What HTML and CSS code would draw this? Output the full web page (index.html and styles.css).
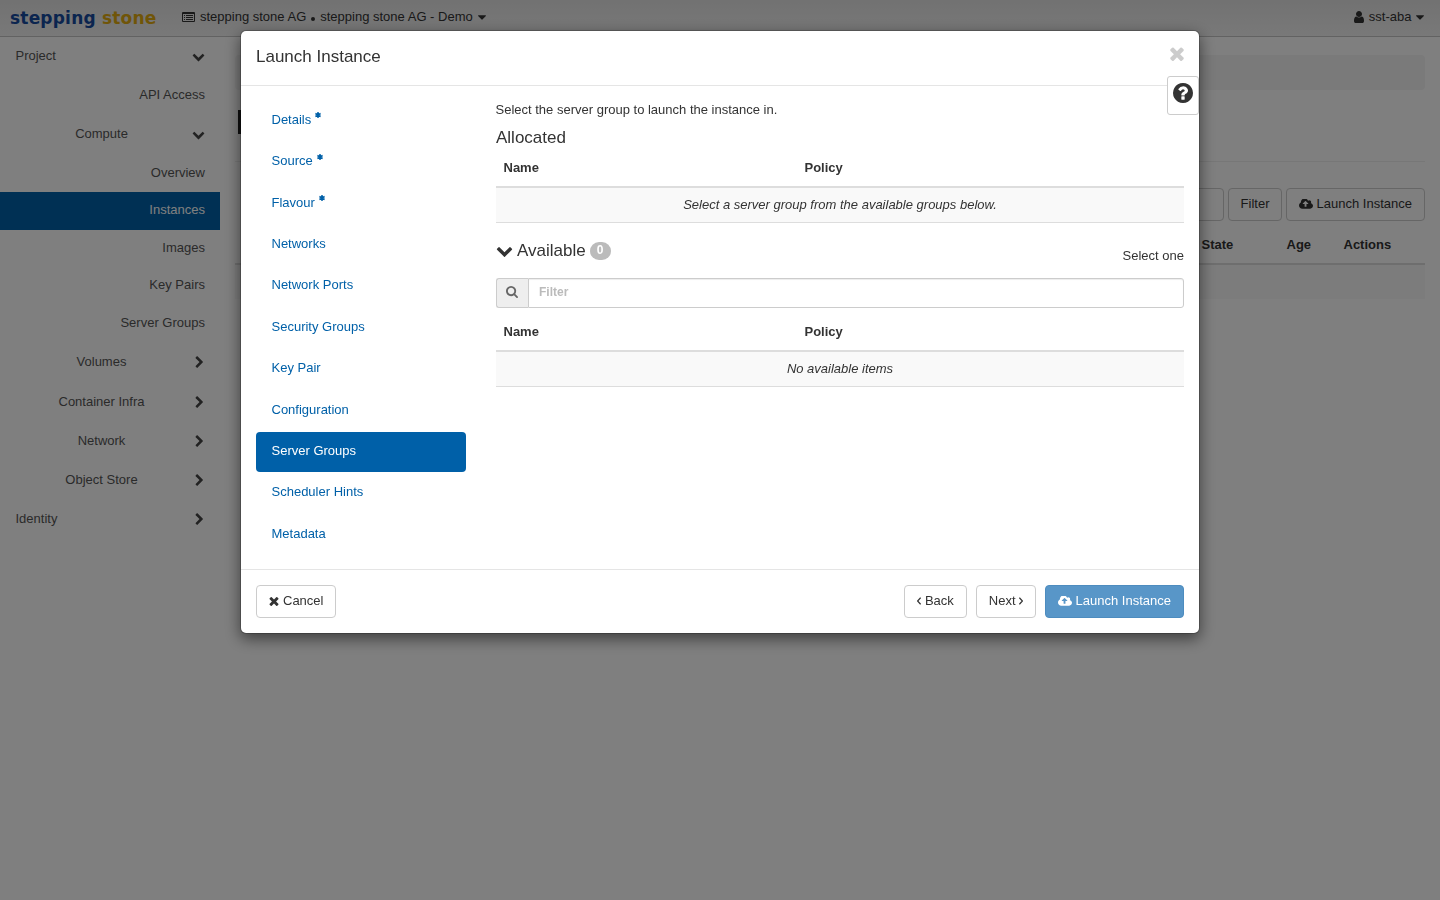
FILE: index.html
```html
<!DOCTYPE html>
<html lang="en">
<head>
  <meta charset="UTF-8" />
  <meta name="viewport" content="width=device-width, initial-scale=1.0"/>
  <title>Instances</title>
  <link rel="stylesheet" href="styles.css">
</head>
<body>
  <!-- Icon definitions -->
  <svg class="icon-defs" width="0" height="0">
    <symbol id="chevron-down" viewBox="0 0 1792 1792"><path d="M1683 808l-742 741q-19 19-45 19t-45-19l-742-741q-19-19-19-45.500t19-45.500l166-165q19-19 45-19t45 19l531 531 531-531q19-19 45-19t45 19l166 165q19 19 19 45.500t-19 45.500z"/></symbol>
    <symbol id="chevron-right" viewBox="0 0 1792 1792"><path d="M1363 877l-742 742q-19 19-45 19t-45-19l-166-166q-19-19-19-45t19-45l531-531-531-531q-19-19-19-45t19-45l166-166q19-19 45-19t45 19l742 742q19 19 19 45t-19 45z"/></symbol>
    <symbol id="caret-down" viewBox="384 640 1024 576"><path d="M1408 704q0 26-19 45l-448 448q-19 19-45 19t-45-19l-448-448q-19-19-19-45t19-45 45-19h896q26 0 45 19t19 45z"/></symbol>
    <symbol id="times" viewBox="302 238 1188 1316"><path d="M1490 1322q0 40-28 68l-136 136q-28 28-68 28t-68-28l-294-294-294 294q-28 28-68 28t-68-28l-136-136q-28-28-28-68t28-68l294-294-294-294q-28-28-28-68t28-68l136-136q28-28 68-28t68 28l294 294 294-294q28-28 68-28t68 28l136 136q28 28 28 68t-28 68l-294 294 294 294q28 28 28 68z"/></symbol>
    <symbol id="user" viewBox="256 128 1280 1536"><path d="M1536 1399q0 109-62.500 187t-150.500 78h-854q-88 0-150.500-78t-62.500-187q0-85 8.500-160.500t31.500-152 58.500-131 94-89 134.500-34.500q131 128 313 128t313-128q76 0 134.500 34.500t94 89 58.500 131 31.500 152 8.500 160.500zm-256-887q0 159-112.500 271.500t-271.500 112.500-271.500-112.500-112.500-271.500 112.500-271.500 271.500-112.500 271.500 112.500 112.500 271.500z"/></symbol>
    <symbol id="question" viewBox="128 128 1536 1536"><path d="M1024 1376v-192q0-14-9-23t-23-9h-192q-14 0-23 9t-9 23v192q0 14 9 23t23 9h192q14 0 23-9t9-23zm256-672q0-88-55.500-163t-138.500-116-170-41q-243 0-371 213-15 24 8 42l132 100q7 6 19 6 16 0 25-12 53-68 86-92 34-24 86-24 48 0 85.500 26t37.500 59q0 38-20 61t-68 45q-63 28-115.500 86.500t-52.500 125.500v36q0 14 9 23t23 9h192q14 0 23-9t9-23q0-19 21.500-49.500t54.500-49.500q32-18 49-28.500t46-35 44.500-48 28-60.500 12.500-81zm384 192q0 209-103 385.500t-279.500 279.500-385.500 103-385.500-103-279.500-279.500-103-385.500 103-385.500 279.500-279.500 385.500-103 385.500 103 279.500 279.500 103 385.500z"/></symbol>
    <symbol id="search" viewBox="64 128 1664 1664"><path d="M1216 832q0-185-131.500-316.500t-316.500-131.500-316.500 131.500-131.500 316.500 131.500 316.500 316.500 131.500 316.500-131.500 131.500-316.500zm512 832q0 52-38 90t-90 38q-54 0-90-38l-343-342q-179 124-399 124-143 0-273.500-55.500t-225-150-150-225-55.500-273.500 55.500-273.500 150-225 225-150 273.500-55.500 273.500 55.500 225 150 150 225 55.500 273.500q0 220-124 399l343 343q37 37 37 90z"/></symbol>
    <symbol id="cloud-upload" viewBox="0 256 1920 1280"><path d="M1280 864q0-14-9-23l-352-352q-9-9-23-9t-23 9l-351 351q-10 12-10 24 0 14 9 23t23 9h224v352q0 13 9.500 22.500t22.500 9.500h192q13 0 22.500-9.500t9.500-22.500v-352h224q13 0 22.500-9.500t9.500-22.500zm640 288q0 159-112.500 271.500t-271.500 112.500h-1088q-185 0-316.500-131.500t-131.500-316.500q0-130 70-240t188-165q-2-30-2-43 0-212 150-362t362-150q156 0 285.500 87t188.500 231q71-62 166-62 106 0 181 75t75 181q0 76-41 138 130 31 213.500 135.500t83.500 238.500z"/></symbol>
    <symbol id="list-alt" viewBox="0 0 13 10"><path fill-rule="evenodd" d="M1 0h11a1 1 0 0 1 1 1v8a1 1 0 0 1-1 1h-11a1 1 0 0 1-1-1v-8a1 1 0 0 1 1-1zM1 2v7h11v-7zM2 3h1v1h-1zM4 3h7v1h-7zM2 5h1v1h-1zM4 5h7v1h-7zM2 7h1v1h-1zM4 7h7v1h-7z"/></symbol>
    <symbol id="asterisk" viewBox="0 0 6 6"><path d="M3 0v6M.4 1.500l5.200 3M5.600 1.500l-5.200 3" stroke="currentColor" stroke-width="1.500"/></symbol>
    <symbol id="angle-left" viewBox="0.500 0 4 8"><path d="M4.100 .7l-3 3.300 3 3.300" fill="none" stroke="currentColor" stroke-width="1.200"/></symbol>
    <symbol id="angle-right" viewBox="0.500 0 4 8"><path d="M.9 .7l3 3.300-3 3.300" fill="none" stroke="currentColor" stroke-width="1.200"/></symbol>
  </svg>

  <!-- Top bar -->
  <header class="navbar">
    <a class="brand"><span class="brand-blue">stepping</span> <span class="brand-gold">stone</span></a>
    <div class="context">
      <svg class="i-list"><use href="#list-alt"/></svg>
      <span>stepping stone AG</span>
      <span class="dot"></span>
      <span>stepping stone AG - Demo</span>
      <svg class="i-caret"><use href="#caret-down"/></svg>
    </div>
    <div class="user-menu">
      <svg class="i-user"><use href="#user"/></svg>
      <span>sst-aba</span>
      <svg class="i-caret"><use href="#caret-down"/></svg>
    </div>
  </header>

  <div class="page">
    <!-- Sidebar -->
    <nav class="sidebar">
      <a class="side-top"><span>Project</span><svg class="i-chevron"><use href="#chevron-down"/></svg></a>
      <a class="side-leaf tall">API Access</a>
      <a class="side-group"><span>Compute</span><svg class="i-chevron"><use href="#chevron-down"/></svg></a>
      <a class="side-leaf first">Overview</a>
      <a class="side-leaf active">Instances</a>
      <a class="side-leaf">Images</a>
      <a class="side-leaf">Key Pairs</a>
      <a class="side-leaf">Server Groups</a>
      <a class="side-group closed"><span>Volumes</span><svg class="i-chevron right"><use href="#chevron-right"/></svg></a>
      <a class="side-group closed"><span>Container Infra</span><svg class="i-chevron right"><use href="#chevron-right"/></svg></a>
      <a class="side-group closed"><span>Network</span><svg class="i-chevron right"><use href="#chevron-right"/></svg></a>
      <a class="side-group closed"><span>Object Store</span><svg class="i-chevron right"><use href="#chevron-right"/></svg></a>
      <a class="side-top closed"><span>Identity</span><svg class="i-chevron right"><use href="#chevron-right"/></svg></a>
    </nav>

    <!-- Instances page -->
    <main class="content">
      <div class="breadcrumb"></div>
      <div class="page-header"><div class="title-bar"></div></div>
      <div class="toolbar">
        <input class="search-input" type="text">
        <button class="btn">Filter</button>
        <button class="btn"><svg class="i-cloud"><use href="#cloud-upload"/></svg>Launch Instance</button>
      </div>
      <div class="instances-head">
        <span class="col-state">State</span>
        <span class="col-age">Age</span>
        <span class="col-actions">Actions</span>
      </div>
      <div class="instances-row"></div>
    </main>
  </div>

  <!-- Launch Instance wizard -->
  <div class="backdrop">
    <div class="modal">
      <div class="modal-header">
        <h2>Launch Instance</h2>
        <svg class="i-close"><use href="#times"/></svg>
      </div>
      <button class="help-btn"><svg class="i-help"><use href="#question"/></svg></button>

      <div class="modal-body">
        <nav class="steps">
          <a class="step">Details<svg class="i-req"><use href="#asterisk"/></svg></a>
          <a class="step">Source<svg class="i-req"><use href="#asterisk"/></svg></a>
          <a class="step">Flavour<svg class="i-req"><use href="#asterisk"/></svg></a>
          <a class="step">Networks</a>
          <a class="step">Network Ports</a>
          <a class="step">Security Groups</a>
          <a class="step">Key Pair</a>
          <a class="step">Configuration</a>
          <a class="step active">Server Groups</a>
          <a class="step">Scheduler Hints</a>
          <a class="step">Metadata</a>
        </nav>

        <section class="panel">
          <p class="intro">Select the server group to launch the instance in.</p>
          <h3>Allocated</h3>
          <table>
            <thead><tr><th class="col-name">Name</th><th>Policy</th></tr></thead>
            <tbody><tr><td colspan="2">Select a server group from the available groups below.</td></tr></tbody>
          </table>

          <div class="available">
            <svg class="i-toggle"><use href="#chevron-down"/></svg>
            <h3>Available</h3>
            <span class="badge">0</span>
            <span class="hint">Select one</span>
          </div>
          <div class="filter">
            <span class="filter-icon"><svg class="i-search"><use href="#search"/></svg></span>
            <input type="text" placeholder="Filter">
          </div>
          <table>
            <thead><tr><th class="col-name">Name</th><th>Policy</th></tr></thead>
            <tbody><tr><td colspan="2">No available items</td></tr></tbody>
          </table>
        </section>
      </div>

      <div class="modal-footer">
        <button class="btn cancel"><svg class="i-cancel"><use href="#times"/></svg>Cancel</button>
        <button class="btn"><svg class="i-angle"><use href="#angle-left"/></svg>Back</button>
        <button class="btn">Next<svg class="i-angle right"><use href="#angle-right"/></svg></button>
        <button class="btn primary"><svg class="i-cloud"><use href="#cloud-upload"/></svg>Launch Instance</button>
      </div>
    </div>
  </div>
</body>
</html>
```
FILE: styles.css
```css
/* Global Styles */
* {
  box-sizing: border-box;
}

body {
  margin: 0;
  height: 100vh;
  overflow: hidden;
  font-family: "Liberation Sans", Arial, sans-serif;
  font-size: 13px;
  line-height: 18px;
  color: #333;
  background: #fff;
}

h2, h3, p {
  margin: 0;
  font-weight: normal;
}

svg {
  display: block;
  flex: none;
  fill: currentColor;
}

.icon-defs {
  position: absolute;
}

/* Icon sizes */
.i-list { width: 13px; height: 10px; margin-top: -1px; }
.i-caret { width: 8px; height: 5px; }
.i-user { width: 10px; height: 12px; margin-top: -1px; }
.i-chevron { width: 13px; height: 13px; }
.i-cloud { width: 14px; height: 10px; margin-right: 4px; }
.i-close { width: 14px; height: 15px; color: #ccc; }
.i-help { width: 20px; height: 20px; }
.i-req { width: 6px; height: 6px; margin: -9px 0 0 4px; }
.i-toggle { width: 17px; height: 17px; margin: -2px 0 0 -0.5px; }
.i-search { width: 12px; height: 12px; }
.i-cancel { width: 10px; height: 10px; margin-right: 4px; }
.i-angle { width: 4px; height: 8px; margin-right: 4px; }
.i-angle.right { margin: 0 0 0 3px; }

/* Top bar */
.navbar {
  display: flex;
  align-items: center;
  height: 37px;
  padding: 0 16px 2px 9px;
  border-bottom: 1px solid #c4c4c4;
  background: linear-gradient(#e4e4e4, #f2f2f2);
}

.brand {
  width: 173px;
  padding: 1px 0 0 1px;
  font-family: "DejaVu Sans", Verdana, sans-serif;
  font-size: 17px;
  font-weight: bold;
  letter-spacing: 0.2px;
  white-space: nowrap;
}

.brand-blue { color: #164a9f; }
.brand-gold { color: #e0aa10; }

.context,
.user-menu {
  display: flex;
  align-items: center;
  gap: 5px;
}

.user-menu {
  gap: 4.5px;
  margin-left: auto;
}

.dot {
  width: 4px;
  height: 4px;
  margin-top: 3px;
  border-radius: 50%;
  background: #333;
}

/* Sidebar */
.page {
  display: flex;
}

.sidebar {
  width: 220px;
}

.sidebar a {
  display: flex;
  align-items: center;
  height: 39.2px;
  padding: 0 15px 2px;
  color: #555;
}

.side-top,
.side-group {
  justify-content: space-between;
}

.sidebar .side-top {
  padding-left: 15.5px;
}

.sidebar .side-group span {
  flex: 1;
  text-align: center;
}

.sidebar .side-group {
  padding-left: 11px;
}

.sidebar .i-chevron {
  margin-top: 1px;
  color: #444;
}

.sidebar .i-chevron.right {
  margin: 1px -1px 0 1px;
}

.sidebar .side-leaf {
  justify-content: flex-end;
  height: 37.6px;
}

.sidebar .side-leaf.tall {
  height: 39px;
}

.sidebar .side-leaf.first {
  padding-bottom: 0;
}

.sidebar .side-leaf.active {
  color: #fff;
  background: #0060a8;
}

.sidebar .side-leaf.active ~ a {
  padding-bottom: 1px;
}

.sidebar .side-leaf.active ~ a.closed {
  padding: 1px 15px 0 11px;
}

.sidebar .side-leaf.active ~ a.side-top {
  padding-left: 15.5px;
}

/* Instances page */
.content {
  flex: 1;
  padding: 18px 15px 0;
}

.breadcrumb {
  height: 35px;
  border-radius: 4px;
  background: #f5f5f5;
}

.page-header {
  height: 72px;
  padding: 20px 3px 0;
  border-bottom: 1px solid #eee;
}

.title-bar {
  width: 4px;
  height: 24px;
  background: #222;
}

.toolbar {
  display: flex;
  justify-content: flex-end;
  gap: 4px;
  margin-top: 26px;
}

.toolbar .btn:nth-child(2) {
  width: 54px;
}

.search-input {
  width: 180px;
  border: 1px solid #ccc;
  border-radius: 4px;
}

.instances-head {
  display: flex;
  justify-content: flex-end;
  height: 44px;
  padding-top: 15px;
  border-bottom: 2px solid #ddd;
  font-weight: bold;
}

.col-state { width: 85px; }
.col-age { width: 57px; }
.col-actions { width: 81.5px; }

.instances-row {
  height: 34px;
  background: #f9f9f9;
}

/* Buttons */
.btn {
  display: flex;
  align-items: center;
  height: 33px;
  padding: 0 12px 2px;
  border: 1px solid #ccc;
  border-radius: 4px;
  font: inherit;
  color: #333;
  background: #fff;
  white-space: nowrap;
}

.btn.primary {
  border-color: #4d8cbf;
  color: #fff;
  background: #5896c8;
}

/* Modal */
.backdrop {
  position: fixed;
  inset: 0;
  padding-top: 30px;
  background: rgba(0, 0, 0, 0.5);
}

.modal {
  position: relative;
  width: 960px;
  margin: 0 auto;
  border: 1px solid rgba(0, 0, 0, 0.2);
  border-radius: 6px;
  background: #fff;
  background-clip: padding-box;
  box-shadow: 0 5px 15px rgba(0, 0, 0, 0.5);
}

.modal-header {
  display: flex;
  justify-content: space-between;
  height: 55px;
  padding: 16px 15.5px 0 15px;
  border-bottom: 1px solid #e5e5e5;
}

.modal-header h2,
.panel h3 {
  font-size: 17px;
  line-height: 20px;
}

.modal-header .i-close {
  margin-top: -1px;
}

/* Help toggle hangs over the header line */
.help-btn {
  position: absolute;
  top: 45px;
  right: 0;
  width: 32px;
  height: 39px;
  padding: 0 0 5px 5px;
  border: 1px solid #ccc;
  border-radius: 3px;
  color: #333;
  background: #fff;
}

.modal-body {
  display: flex;
  gap: 30px;
  height: 483px;
  padding: 15px;
}

/* Wizard steps */
.steps {
  width: 210px;
}

.step {
  display: flex;
  align-items: center;
  height: 39.6px;
  margin-bottom: 1.8px;
  padding: 0 15.5px 2px;
  border-radius: 4px;
  color: #0060a8;
}

.step.active {
  color: #fff;
  background: #0060a8;
}

/* Server group tables */
.panel {
  flex: 1;
}

.panel .intro {
  margin: 0 0 9px -0.5px;
}

table {
  width: 100%;
  border-collapse: separate;
  border-spacing: 0;
}

th {
  height: 40px;
  padding: 2px 7.5px 0;
  border-bottom: 2px solid #ddd;
  text-align: left;
}

.col-name {
  width: 301px;
}

td {
  height: 35px;
  padding: 0 8px;
  border-bottom: 1px solid #ddd;
  font-style: italic;
  text-align: center;
  background: #f9f9f9;
}

.available {
  display: flex;
  align-items: center;
  height: 20px;
  margin: 18px 0 17px;
}

.available h3 {
  margin: 0 4px 0 4.5px;
}

.badge {
  width: 21px;
  height: 18px;
  border-radius: 9px;
  font-size: 12px;
  font-weight: bold;
  line-height: 17px;
  text-align: center;
  color: #fff;
  background: #bbb;
}

.hint {
  margin: 9px 0 0 auto;
}

.filter {
  display: flex;
  height: 30px;
  margin-bottom: 4px;
}

.filter-icon {
  display: flex;
  align-items: center;
  justify-content: center;
  width: 32px;
  padding: 0 1px 2px 0;
  border: 1px solid #ccc;
  border-right: 0;
  border-radius: 3px 0 0 3px;
  color: #666;
  background: #eee;
}

.filter input {
  flex: 1;
  padding: 0 10px 2px;
  border: 1px solid #ccc;
  border-radius: 0 3px 3px 0;
  font: bold 12px "Liberation Sans", Arial, sans-serif;
  box-shadow: inset 0 1px 1px rgba(0, 0, 0, 0.075);
}

.filter input::placeholder {
  color: #bbb;
}

.modal-footer {
  display: flex;
  gap: 9px;
  padding: 15px;
  border-top: 1px solid #e5e5e5;
}

.cancel {
  margin-right: auto;
}
```
